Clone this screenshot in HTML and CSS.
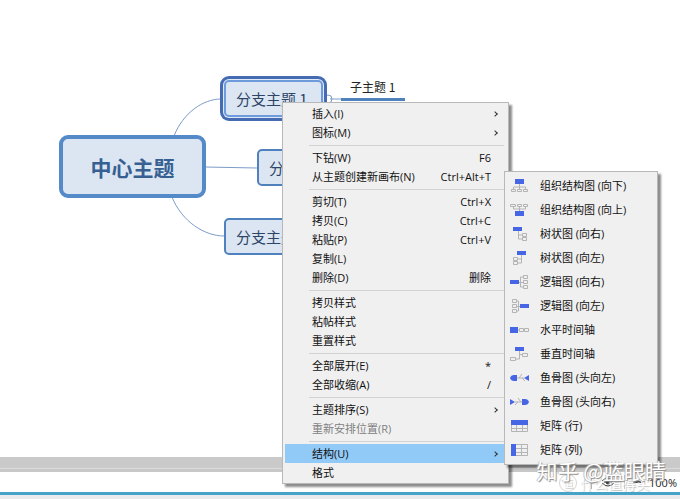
FILE: index.html
```html
<!DOCTYPE html>
<html lang="zh-CN">
<head>
    <meta charset="UTF-8">
    <meta name="viewport" content="width=device-width, initial-scale=1.0">
    <title>思维导图</title>
    <link rel="stylesheet" href="styles.css">
</head>
<body>
    <main class="canvas">
        <svg class="links" width="420" height="260" aria-hidden="true">
            <path d="M174 136C183 113 203 99 221 99M205 167L257 168M172 197C182 222 205 236 224 236M330 99H342"/>
            <circle cx="328" cy="99" r="4"/>
        </svg>
        <div class="node central">中心主题</div>
        <div class="node branch branch-1 selected">分支主题 1</div>
        <div class="node branch branch-2">分支主题 2</div>
        <div class="node branch branch-3">分支主题 3</div>
        <div class="node subtopic">子主题 1</div>
    </main>

    <div class="scrollbar"></div>
    <footer class="statusbar">
        <span class="divider"></span>
        <svg class="eye" width="16" height="12" viewBox="0 0 16 12" aria-hidden="true">
            <path d="M2 5Q8 -1 14 5M2 7Q8 13 14 7M4 6H12"/>
            <circle cx="8" cy="6" r="2"/>
        </svg>
        <span class="divider"></span>
        <span class="minus"></span>
        <span class="zoom-level">100%</span>
    </footer>
    <div class="taskbar"></div>

    <!-- Menu contextuel -->
    <div class="menu context-menu" role="menu">
        <button class="item">插入(I)<span class="arrow"></span></button>
        <button class="item">图标(M)<span class="arrow"></span></button>
        <hr>
        <button class="item">下钻(W)<span class="key">F6</span></button>
        <button class="item">从主题创建新画布(N)<span class="key">Ctrl+Alt+T</span></button>
        <hr>
        <button class="item">剪切(T)<span class="key">Ctrl+X</span></button>
        <button class="item">拷贝(C)<span class="key">Ctrl+C</span></button>
        <button class="item">粘贴(P)<span class="key">Ctrl+V</span></button>
        <button class="item">复制(L)</button>
        <button class="item">删除(D)<span class="key">删除</span></button>
        <hr>
        <button class="item">拷贝样式</button>
        <button class="item">粘帖样式</button>
        <button class="item">重置样式</button>
        <hr>
        <button class="item">全部展开(E)<span class="key">*</span></button>
        <button class="item">全部收缩(A)<span class="key">/</span></button>
        <hr>
        <button class="item">主题排序(S)<span class="arrow"></span></button>
        <button class="item" disabled>重新安排位置(R)</button>
        <hr>
        <button class="item active">结构(U)<span class="arrow"></span></button>
        <button class="item">格式</button>
    </div>

    <!-- Sous-menu structure -->
    <div class="menu submenu" role="menu">
        <button class="item">
            <svg class="icon" viewBox="0 0 20 16"><path class="fill" d="M5 1h9v5H5z"/><path d="M9.500 6v3M3.500 11V9h12v2M9.500 9v2M1.500 11.500h4v2h-4zM7.500 11.500h4v2h-4zM13.500 11.500h4v2h-4z"/></svg>
            组织结构图 (向下)
        </button>
        <button class="item">
            <svg class="icon" viewBox="0 0 20 16"><path class="fill" d="M5 9h9v5H5z"/><path d="M9.500 9V5M3.500 5v2h12V5M.5 2.500h5v2h-5zM7.500 2.500h4v2h-4zM13.500 2.500h4v2h-4z"/></svg>
            组织结构图 (向上)
        </button>
        <button class="item">
            <svg class="icon" viewBox="0 0 20 16"><path class="fill" d="M3 1h9v4H3z"/><path d="M8.500 5v8H12M8.500 9H12M12.500 7.500h4v3h-4zM12.500 11.500h4v3h-4z"/></svg>
            树状图 (向右)
        </button>
        <button class="item">
            <svg class="icon" viewBox="0 0 20 16"><path class="fill" d="M7 1h9v4H7z"/><path d="M11.500 5v8H8M11.500 9H8M3.500 7.500h4v3h-4zM3.500 11.500h4v3h-4z"/></svg>
            树状图 (向左)
        </button>
        <button class="item">
            <svg class="icon" viewBox="0 0 20 16"><path class="fill" d="M0 6h9v4H0z"/><path d="M9 8.500h4M13 3h-2.500v10H13M13.500 1.500h4v3h-4zM13.500 6.500h4v3h-4zM13.500 11.500h4v3h-4z"/></svg>
            逻辑图 (向右)
        </button>
        <button class="item">
            <svg class="icon" viewBox="0 0 20 16"><path class="fill" d="M10 6h9v4h-9z"/><path d="M10 8.500H6M6 3h2.500v10H6M2.500 1.500h4v3h-4zM2.500 6.500h4v3h-4zM2.500 11.500h4v3h-4z"/></svg>
            逻辑图 (向左)
        </button>
        <button class="item">
            <svg class="icon" viewBox="0 0 20 16"><path class="fill" d="M0 5h8v6H0z"/><path d="M8 8h1.500M9.500 6.500h4v3h-4zM13.500 8h1M14.500 6.500h4v3h-4z"/></svg>
            水平时间轴
        </button>
        <button class="item">
            <svg class="icon" viewBox="0 0 20 16"><path class="fill" d="M5 1h9v4H5z"/><path d="M9.500 5v8H6M9.500 8.500H12M12.500 7.500h5v3h-5zM.5 11.500h5v3h-5z"/></svg>
            垂直时间轴
        </button>
        <button class="item">
            <svg class="icon" viewBox="0 0 20 16"><path class="fill" d="M7 5v6H4Q1 11 0 8Q1 5 4 5zM19 5v6l-5-3z"/><path d="M7 8h7M12 4L9 8M15 11l-3-3"/></svg>
            鱼骨图 (头向左)
        </button>
        <button class="item">
            <svg class="icon" viewBox="0 0 20 16"><path class="fill" d="M12 5v6h3Q18 11 19 8Q18 5 15 5zM0 5v6l5-3z"/><path d="M5 8h7M8 4l3 4M5 11l3-3"/></svg>
            鱼骨图 (头向右)
        </button>
        <button class="item">
            <svg class="icon" viewBox="0 0 20 16"><path class="fill" d="M1 2h17v5H1z"/><path d="M1.500 7v6.500h16V7M1.500 10.500h16M6.500 7v6.500M12.500 7v6.500"/></svg>
            矩阵 (行)
        </button>
        <button class="item">
            <svg class="icon" viewBox="0 0 20 16"><path class="fill" d="M1 2h5v12H1z"/><path d="M6 2.500h11.500v11H6M11.500 2.500v11M6 6.500h11.500M6 10.500h11.500"/></svg>
            矩阵 (列)
        </button>
    </div>

    <div class="watermark-small"><span class="ring">值</span>什么值得买</div>
    <div class="watermark">知乎 @蓝眼睛</div>
</body>
</html>
```
FILE: styles.css
```css
body {
    position: relative;
    display: flex;
    flex-direction: column;
    min-height: 100vh;
    margin: 0;
    overflow: hidden;
    background: #fff;
    font-family: "Open Sans", "Noto Sans CJK SC", sans-serif;
}

.canvas {
    position: relative;
    flex: 1;
}

/* Carte mentale */
.links {
    position: absolute;
    top: 0;
    left: 0;
    fill: none;
    stroke: #7d9cc8;
    stroke-width: 1;
}

.node {
    position: absolute;
    box-sizing: border-box;
    display: flex;
    align-items: center;
    white-space: nowrap;
    color: #2c4468;
    background: #dce6f2;
    border: 2px solid #4f81bd;
    border-radius: 5px;
    font-family: "Noto Sans CJK SC", sans-serif;
}

.central {
    left: 59px;
    top: 135px;
    width: 147px;
    height: 63px;
    justify-content: center;
    border: 4px solid #558ac9;
    border-radius: 9px;
    color: #376092;
    font-size: 21px;
    font-weight: bold;
}

.branch {
    width: 99px;
    height: 37px;
    padding-left: 10px;
    font-size: 15px;
}

.branch-1 {
    left: 224px;
    top: 80px;
}

.branch-2 {
    left: 257px;
    top: 149px;
}

.branch-3 {
    left: 224px;
    top: 218px;
}

.selected {
    border-color: #6d9bdb;
    box-shadow: 0 0 0 1px #dfe9f8, 0 0 0 4px #456bb3;
}

.subtopic {
    left: 341px;
    top: 75px;
    width: 64px;
    height: 26px;
    padding-left: 9px;
    background: none;
    border: 0;
    border-bottom: 3px solid #4f81bd;
    border-radius: 0;
    color: #222;
    font-size: 12px;
}

/* Bas de la fenêtre */
.scrollbar {
    height: 11px;
    background: #cacaca;
    border-bottom: 1px solid #dcdcdc;
    box-shadow: 0 3px 0 #c8c8c8;
    margin-bottom: 3px;
}

.statusbar {
    display: flex;
    align-items: center;
    justify-content: flex-end;
    gap: 8px;
    height: 20px;
    padding-right: 3px;
    background: #fff;
    font-size: 11px;
    color: #222;
}

.divider {
    width: 1px;
    height: 14px;
    background: #b5b5b5;
}

.eye {
    fill: #333;
    stroke: #333;
}

.eye path {
    fill: none;
}

.minus {
    width: 8px;
    height: 2px;
    background: #444;
}

.taskbar {
    height: 4px;
    background: #e8eaeb;
    border-top: 3px solid #45a3c8;
}

/* Menus */
.menu {
    position: absolute;
    box-sizing: border-box;
    display: flex;
    flex-direction: column;
    background: #f0f0f0;
    border: 1px solid #b8b8b8;
    box-shadow: 3px 3px 2px rgba(0, 0, 0, 0.45);
}

.context-menu {
    left: 282px;
    top: 102px;
    width: 227px;
    padding: 1px 2px;
}

.submenu {
    left: 504px;
    top: 171px;
    width: 154px;
    padding: 2px;
}

.item {
    display: flex;
    align-items: center;
    height: 19px;
    padding: 0 9px 0 27px;
    border: 0;
    background: none;
    color: #111;
    font-family: inherit;
    font-size: 11px;
    line-height: 18px;
    text-align: left;
    white-space: nowrap;
}

.item:hover,
.item.active {
    background: #91c9f7;
}

.item:disabled {
    color: #808080;
    background: none;
}

.key {
    margin-left: auto;
    padding-right: 6px;
}

.arrow {
    width: 3px;
    height: 3px;
    margin-left: auto;
    border-top: 1px solid #333;
    border-right: 1px solid #333;
    transform: rotate(45deg);
}

.menu hr {
    width: 195px;
    height: 1px;
    margin: 3px 0 2px 24px;
    border: 0;
    background: #d2d2d2;
}

.submenu .item {
    height: 24px;
    gap: 10px;
    padding: 0 3px;
}

.icon {
    width: 20px;
    height: 16px;
    fill: none;
    stroke: #b4b4b4;
    stroke-width: 1;
}

.icon .fill {
    fill: #4766e6;
    stroke: none;
}

/* Filigranes */
.watermark,
.watermark-small {
    position: absolute;
    color: #fff;
    white-space: nowrap;
    pointer-events: none;
    font-family: "Noto Sans CJK SC", sans-serif;
}

.watermark {
    right: 14px;
    bottom: 13px;
    font-size: 21px;
    line-height: 32px;
    text-shadow: 1px 1px 1px #888, -1px 0 1px #bbb;
}

.watermark-small {
    display: flex;
    align-items: center;
    gap: 3px;
    right: 30px;
    bottom: 6px;
    font-size: 14px;
    line-height: 20px;
    opacity: 0.6;
    text-shadow: 1px 1px 1px #999;
}

.ring {
    width: 16px;
    height: 16px;
    border: 1px solid #bbb;
    border-radius: 50%;
    font-size: 10px;
    line-height: 16px;
    text-align: center;
}
```
